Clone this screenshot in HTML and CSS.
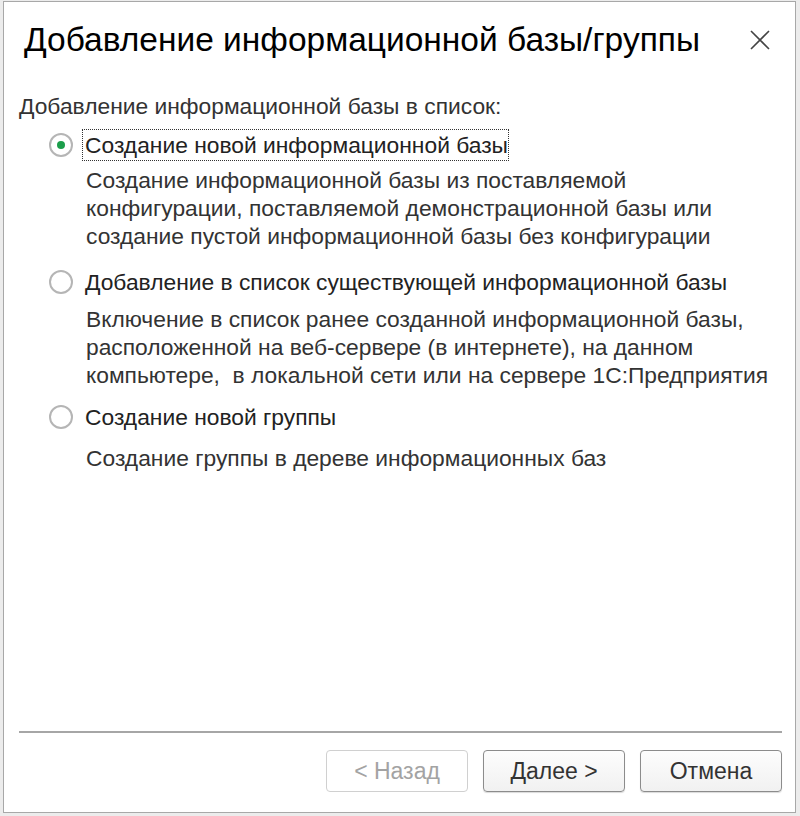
FILE: index.html
```html
<!DOCTYPE html>
<html lang="ru">
<head>
<meta charset="utf-8">
<title>Добавление информационной базы/группы</title>
<link rel="stylesheet" href="styles.css">
</head>
<body>
<div class="dialog">
  <div class="titlebar">
    <h1 class="title">Добавление информационной базы/группы</h1>
    <span class="close" aria-label="Закрыть">
      <svg width="20" height="20" viewBox="0 0 20 20"><path d="M1 1 L19 19 M19 1 L1 19" stroke="#444" stroke-width="1.6" fill="none"/></svg>
    </span>
  </div>
  <div class="content">
    <div class="caption">Добавление информационной базы в список:</div>
    <div class="options">
      <div class="option">
        <div class="opt-row">
          <span class="radio checked"><span class="dot"></span></span>
          <span class="opt-label focused">Создание новой информационной базы</span>
        </div>
        <div class="desc desc-first">Создание информационной базы из поставляемой<br>конфигурации, поставляемой демонстрационной базы или<br>создание пустой информационной базы без конфигурации</div>
      </div>
      <div class="option">
        <div class="opt-row">
          <span class="radio"></span>
          <span class="opt-label">Добавление в список существующей информационной базы</span>
        </div>
        <div class="desc desc-second">Включение в список ранее созданной информационной базы,<br>расположенной на веб-сервере (в интернете), на данном<br>компьютере,&nbsp; в локальной сети или на сервере 1С:Предприятия</div>
      </div>
      <div class="option">
        <div class="opt-row">
          <span class="radio"></span>
          <span class="opt-label">Создание новой группы</span>
        </div>
        <div class="desc desc-last">Создание группы в дереве информационных баз</div>
      </div>
    </div>
  </div>
  <div class="footer">
    <div class="separator"></div>
    <div class="buttons">
      <button class="btn disabled">&lt; Назад</button>
      <button class="btn">Далее &gt;</button>
      <button class="btn">Отмена</button>
    </div>
  </div>
</div>
</body>
</html>
```
FILE: styles.css
```css
html, body {
  margin: 0;
  padding: 0;
  background: #ececec;
}
body {
  width: 800px;
  height: 816px;
  padding: 1px 0 0 3px;
  box-sizing: border-box;
  font-family: "Liberation Sans", Arial, sans-serif;
}
.dialog {
  width: 793px;
  height: 812px;
  box-sizing: border-box;
  background: #fff;
  border: 1px solid #a8a8a8;
  display: flex;
  flex-direction: column;
}
.titlebar {
  display: flex;
  align-items: center;
  justify-content: space-between;
  height: 78px;
  padding: 0 25px 2px 20px;
  box-sizing: border-box;
}
.title {
  margin: 0;
  font-weight: normal;
  font-size: 33.5px;
  color: #000;
}
.close {
  display: flex;
  width: 20px;
  height: 20px;
}
.content {
  flex: 1;
  padding: 13px 0 0 15px;
}
.caption {
  font-size: 22.8px;
  color: #333;
  line-height: 26px;
}
.options {
  padding-left: 30px;
  padding-top: 9px;
}
.opt-row {
  display: flex;
  align-items: center;
  height: 34px;
}
.radio {
  width: 24px;
  height: 24px;
  box-sizing: border-box;
  border: 2px solid #b5b5b5;
  border-radius: 50%;
  display: flex;
  align-items: center;
  justify-content: center;
  flex: none;
}
.dot {
  width: 8px;
  height: 8px;
  border-radius: 50%;
  background: #1b9e4b;
}
.opt-label {
  margin-left: 9px;
  font-size: 22.8px;
  line-height: 26px;
  color: #222;
  padding: 2px 0 2px 2px;
  border: 1px solid transparent;
}
.opt-label.focused {
  border: 1px dotted #333;
}
.desc {
  margin: 6px 0 13px 37px;
  font-size: 22.8px;
  line-height: 28px;
  color: #333;
}
.desc-first {
  margin-top: 4px;
  margin-bottom: 15px;
}
.desc-second {
  margin-bottom: 11px;
}
.desc-last {
  margin-top: 10px;
}
.footer {
  padding: 0 13px 20px 15px;
}
.separator {
  height: 2px;
  background: #a6a6a6;
}
.buttons {
  display: flex;
  justify-content: flex-end;
  gap: 15px;
  margin-top: 17px;
}
.btn {
  width: 142px;
  height: 42px;
  font-family: "Liberation Sans", Arial, sans-serif;
  font-size: 23px;
  color: #333;
  background: linear-gradient(#fdfdfd, #f1f1f1);
  border: 1px solid #8c8c8c;
  border-radius: 4px;
  box-shadow: 0 1px 1px rgba(0,0,0,0.15);
  padding: 0;
}
.btn.disabled {
  color: #a3a3a3;
  border-color: #d0d0d0;
  box-shadow: none;
  background: #fff;
}
```
